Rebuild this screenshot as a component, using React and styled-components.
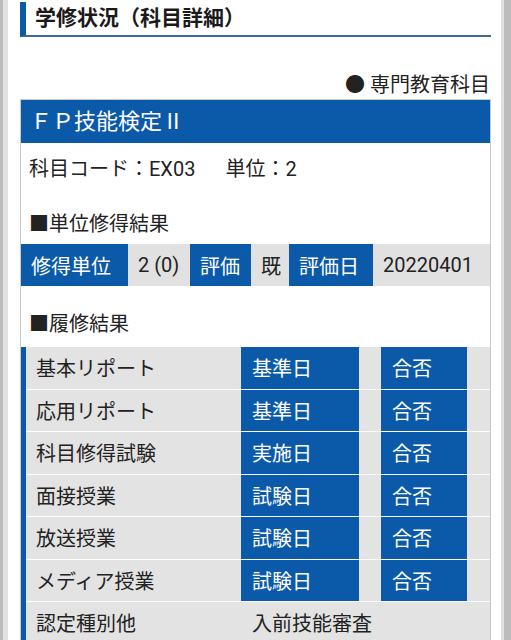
import React from "react";
import styled, { createGlobalStyle } from "styled-components";

const Global = createGlobalStyle`
  html, body { margin: 0; padding: 0; }
  body {
    background: #bdbdbd;
    font-family: Roboto, "Noto Sans CJK JP", "Noto Sans", sans-serif;
    color: #222;
  }
  * { box-sizing: border-box; }
`;

const BLUE = "#0b5aa9";

const Shell = styled.div`
  background: #bcbcbc;
  padding: 0 7px 0 3px;
  min-height: 640px;
  display: flex;
`;

const Bezel = styled.div`
  flex: 1;
  background: #e1e1e1;
  padding: 0 3px 0 5px;
  display: flex;
`;

const Page = styled.main`
  flex: 1;
  background: #fff;
  padding: 2px 10px 0 12px;
  min-height: 640px;
`;

const PageTitle = styled.h1`
  margin: 0;
  font-size: 21px;
  font-weight: 700;
  line-height: 33px;
  border-left: 6px solid ${BLUE};
  border-bottom: 2px solid #3c6c95;
  padding-left: 9px;
  color: #1a1a1a;
`;

const Category = styled.div`
  margin-top: 33px;
  text-align: right;
  font-size: 20px;
  line-height: 30px;
  padding-right: 1px;
`;

const Card = styled.section`
  margin-top: -1px;
  border: 1px solid #c9c9c9;
  background: #fff;
`;

const CardTitle = styled.h2`
  margin: 0;
  height: 43px;
  background: ${BLUE};
  color: #fff;
  font-size: 22px;
  font-weight: 400;
  line-height: 43px;
  padding-left: 9px;
`;

const InfoLine = styled.div`
  margin-top: 11px;
  display: flex;
  gap: 30px;
  padding-left: 8px;
  font-size: 20px;
  line-height: 30px;
`;

const SectionHeading = styled.h3`
  margin: ${(p) => p.$top}px 0 0;
  padding-left: 8px;
  font-size: 20px;
  font-weight: 400;
  line-height: 30px;
`;

const CreditRow = styled.div`
  margin-top: 5px;
  display: grid;
  grid-template-columns: 107px 62px 61px 38px 84px 1fr;
  height: 42px;
  background: #e1e1e1;
`;

const Cell = styled.div`
  display: flex;
  align-items: center;
  padding: 0 10px;
  font-size: 20px;
  white-space: nowrap;
  background: ${(p) => (p.$head ? BLUE : "transparent")};
  color: ${(p) => (p.$head ? "#fff" : "#222")};
`;

const Table = styled.div`
  margin-top: 8px;
  border-left: 5px solid ${BLUE};
  display: flex;
  flex-direction: column;
  gap: 1px;
  background: #fff;
`;

const Row = styled.div`
  display: grid;
  grid-template-columns: 215px 118px 22px 86px 1fr;
  height: 41.5px;
  background: #e3e3e3;
`;

const RowLabel = styled.div`
  display: flex;
  align-items: center;
  padding-left: 10px;
  font-size: 20px;
  white-space: nowrap;
`;

const BlueTag = styled.div`
  display: flex;
  align-items: center;
  padding-left: 11px;
  background: ${BLUE};
  color: #fff;
  font-size: 20px;
  white-space: nowrap;
`;

const Spacer = styled.div``;

const PlainValue = styled.div`
  grid-column: 2 / -1;
  display: flex;
  align-items: center;
  padding-left: 11px;
  font-size: 20px;
  white-space: nowrap;
`;

const rows = [
  ["基本リポート", "基準日"],
  ["応用リポート", "基準日"],
  ["科目修得試験", "実施日"],
  ["面接授業", "試験日"],
  ["放送授業", "試験日"],
  ["メディア授業", "試験日"],
];

export default function App() {
  return (
    <>
      <Global />
      <Shell>
        <Bezel>
          <Page>
            <PageTitle>学修状況（科目詳細）</PageTitle>
            <Category>● 専門教育科目</Category>
            <Card>
              <CardTitle>ＦＰ技能検定Ⅱ</CardTitle>
              <InfoLine>
                <span>科目コード：EX03</span>
                <span>単位：2</span>
              </InfoLine>
              <SectionHeading $top={25}>■単位修得結果</SectionHeading>
              <CreditRow>
                <Cell $head>修得単位</Cell>
                <Cell>2 (0)</Cell>
                <Cell $head>評価</Cell>
                <Cell>既</Cell>
                <Cell $head>評価日</Cell>
                <Cell>20220401</Cell>
              </CreditRow>
              <SectionHeading $top={23}>■履修結果</SectionHeading>
              <Table>
                {rows.map(([label, date]) => (
                  <Row key={label}>
                    <RowLabel>{label}</RowLabel>
                    <BlueTag>{date}</BlueTag>
                    <Spacer />
                    <BlueTag>合否</BlueTag>
                    <Spacer />
                  </Row>
                ))}
                <Row>
                  <RowLabel>認定種別他</RowLabel>
                  <PlainValue>入前技能審査</PlainValue>
                </Row>
              </Table>
            </Card>
          </Page>
        </Bezel>
      </Shell>
    </>
  );
}
